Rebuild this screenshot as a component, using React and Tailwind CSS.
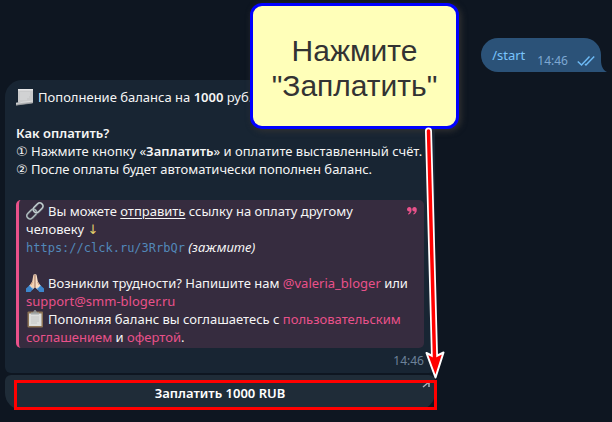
import React from 'react';

function ScrollEmoji() {
    return (
        <svg viewBox="0 0 18 18" className="inline-block w-[18px] h-[18px] -my-1 mr-1 align-baseline" aria-hidden="true">
            <path d="M2 1h15v12.500l-1 1H2z" fill="#c9cacb" />
            <path d="M2 1h15v1.500H2z" fill="#e6e6e6" />
            <path d="M4 5h10M4 7h10M4 9h9M4 11h7" stroke="#d9dadb" strokeWidth="1" />
            <path d="M0 15l17-2v2l-15 2-2 .5z" fill="#b5b7b9" />
            <path d="M0 15.200l17-2.200" stroke="#e6e6e6" strokeWidth=".8" />
            <path d="M.5 17l16-2" stroke="#9a9d9f" strokeWidth=".8" />
        </svg>
    );
}

function LinkEmoji() {
    return (
        <svg viewBox="0 0 18 18" className="inline-block w-[18px] h-[18px] -my-1 mr-1 align-baseline" aria-hidden="true">
            <g fill="none" transform="rotate(-45 9 9)">
                <rect x="-1" y="5.800" width="11" height="6.400" rx="3.200" stroke="#6f7b80" strokeWidth="2" />
                <rect x="-1" y="5.600" width="11" height="6.400" rx="3.200" stroke="#b9c3c6" strokeWidth="1" />
                <rect x="8" y="5.800" width="11" height="6.400" rx="3.200" stroke="#7f8b90" strokeWidth="2" />
                <rect x="8" y="5.600" width="11" height="6.400" rx="3.200" stroke="#cdd5d7" strokeWidth="1" />
            </g>
        </svg>
    );
}

function HandsEmoji() {
    return (
        <svg viewBox="0 0 18 18" className="inline-block w-[18px] h-[18px] -my-1 mr-1 align-baseline" aria-hidden="true">
            <path d="M8.800 0C7.600 0 7.200 1 7 3L6.200 7.500 3.500 11.500 6 16l2.800-2.500z" fill="#f3d2b3" />
            <path d="M9.200 0c1.200 0 1.600 1 1.800 3l.8 4.500 2.700 4L12 16l-2.800-2.500z" fill="#fae0c6" />
            <path d="M9 1v12.500M6.500 8L5 11M11.500 8l1.500 3" stroke="#bd8b6c" strokeWidth=".7" fill="none" />
            <path d="M3.600 11.200L0 14.500V18h4.500l3-3.500c-1.800-.3-3.200-1.500-3.900-3.300z" fill="#3c86cc" />
            <path d="M14.400 11.200L18 14.500V18h-4.500l-3-3.500c1.800-.3 3.200-1.500 3.900-3.300z" fill="#3c86cc" />
            <path d="M3.600 11.200c.7 1.800 2.100 3 3.900 3.300M14.400 11.200c-.7 1.800-2.100 3-3.900 3.300" stroke="#8fc0ee" strokeWidth=".9" fill="none" />
        </svg>
    );
}

function ClipboardEmoji() {
    return (
        <svg viewBox="0 0 18 18" className="inline-block w-[18px] h-[18px] -my-1 mr-1 align-baseline" aria-hidden="true">
            <rect x="1.500" y="1.500" width="15.500" height="16" rx="1" fill="#8c7355" />
            <rect x="3" y="3.500" width="12.500" height="12.500" fill="#dcdedd" />
            <path d="M5 7h8M5 9h8M5 11h8M5 13h6" stroke="#bfc2c2" strokeWidth=".8" />
            <path d="M5 4.500V2.500h2.500C7.500.8 8 .2 9 .2s1.500.6 1.500 2.300H13v2z" fill="#a3a8a9" />
            <circle cx="9" cy="1.800" r=".6" fill="#555" />
        </svg>
    );
}

function OutgoingMessage() {
    return (
        <div className="flex justify-end pr-[11px]">
            <div className="relative flex items-center h-[34px] pl-[11px] pr-[6px] rounded-[17px] rounded-br-none bg-[#2b5278]">
                <a href="#start" className="text-[13px] leading-[18px] text-[#79c4fc]">/start</a>
                <time className="ml-3 mt-3 text-[12px] leading-[18px] text-[#7da8d3]">14:46</time>
                <svg viewBox="0 0 18 12" className="w-[18px] h-3 ml-[9px] mt-3" fill="none" stroke="#6dbaf5" strokeWidth="1.500" aria-label="Прочитано">
                    <path d="M.8 6.500L4.500 10 12.500 1.500M8 9l1 1 8.200-8.500" />
                </svg>
                <svg viewBox="0 0 6 12" className="absolute left-full bottom-0 w-[6px] h-3" aria-hidden="true">
                    <path d="M0 0c0 6 2 10 6 12H0z" fill="#2b5278" />
                </svg>
            </div>
        </div>
    );
}

function InfoQuote() {
    return (
        <blockquote className="relative mt-[22px] py-[2px] pl-[7px] border-l-[3px] border-[#e9518a] rounded-[5px] bg-[#362c3f]">
            <p>
                <LinkEmoji />
                Вы можете <u className="underline-offset-2">отправить</u> ссылку на оплату другому
                <br />
                человеку <span className="font-['DejaVu_Sans',sans-serif] leading-none text-[#e3cf6a]">↓</span>
                <br />
                <a href="#pay" className="font-['DejaVu_Sans_Mono',monospace] text-[12px] leading-none text-[#5288b9]">https://clck.ru/3RrbQr</a>{' '}
                <i>(зажмите)</i>
            </p>
            <p className="mt-[18px]">
                <HandsEmoji />
                Возникли трудности? Напишите нам <a href="#valeria" className="text-[#e9518a]">@valeria_bloger</a> или
                <br />
                <a href="#support" className="text-[#e9518a]">support@smm-bloger.ru</a>
                <br />
                <ClipboardEmoji />
                Пополняя баланс вы соглашаетесь с <a href="#terms" className="text-[#e9518a]">пользовательским
                <br />
                соглашением</a> и <a href="#offer" className="text-[#e9518a]">офертой</a>.
            </p>
            <svg viewBox="0 0 10 8" className="absolute top-[7px] right-[7px] w-[10px] h-2" fill="#e9518a" aria-hidden="true">
                <path d="M2.300 0C3.700 0 4.600 1 4.600 2.700 4.600 5 3.400 7 1.300 7.600L.9 6.800C2 6.200 2.500 5.400 2.600 4.500 1 4.700 0 3.700 0 2.300 0 1 1 0 2.300 0z" />
                <path d="M7.500 0C8.900 0 9.800 1 9.800 2.700 9.800 5 8.600 7 6.500 7.600L6.100 6.800C7.200 6.200 7.700 5.400 7.800 4.500 6.200 4.700 5.200 3.700 5.200 2.300 5.200 1 6.200 0 7.500 0z" />
            </svg>
        </blockquote>
    );
}

function BotMessage() {
    return (
        <div className="w-[430px] max-w-full text-[13px] leading-[18px] whitespace-nowrap text-[#f5f5f5]">
            <div className="pt-2 px-[11px] pb-[3px] rounded-t-[17px] rounded-b-[6px] bg-[#182533]">
                <p>
                    <ScrollEmoji />
                    Пополнение баланса на <b className="font-semibold">1000</b> руб.
                </p>
                <h2 className="mt-[18px] font-semibold">Как оплатить?</h2>
                <p>① Нажмите кнопку «<b className="font-semibold">Заплатить</b>» и оплатите выставленный счёт.</p>
                <p>② После оплаты будет автоматически пополнен баланс.</p>
                <InfoQuote />
                <div className="flex justify-end mt-1">
                    <time className="text-[12px] leading-[18px] text-[#6d8299]">14:46</time>
                </div>
            </div>
            <button type="button" className="relative block w-full h-[35px] mt-[2px] rounded-t-[6px] rounded-b-[17px] bg-[#1f2c38] font-semibold text-white">
                Заплатить 1000 RUB
                <svg viewBox="0 0 8 8" className="absolute top-[6px] right-[5px] w-2 h-2" fill="none" stroke="#a9b2ba" strokeWidth="1.500" aria-hidden="true">
                    <path d="M2 1h5v5M7 1L1 6" />
                </svg>
                <span className="absolute top-[5px] left-[9px] -right-[2px] h-[30px] border-3 border-[#ff0000]" />
            </button>
        </div>
    );
}

function Callout() {
    return (
        <>
            <div className="absolute top-[3px] left-[250px] flex items-center justify-center w-[209px] h-[126px] pt-1 border-3 border-[#0000ff] rounded-[12px] bg-[#ffffb9] shadow-[2px_2px_6px_#333] font-['Liberation_Sans',Arial,sans-serif] text-[30px] leading-[35px] text-center text-[#333333]">
                Нажмите
                <br />
                "Заплатить"
            </div>
            <svg viewBox="0 0 26 254" className="absolute top-[126px] left-[422px] w-[26px] h-[254px]" aria-hidden="true">
                <path d="M6.500 5L12.500 230" stroke="#fff" strokeWidth="7" strokeLinecap="round" />
                <path d="M4.500 227l8 4 9-4.500-8 25z" fill="#f00" stroke="#fff" strokeWidth="2" strokeLinejoin="round" />
                <path d="M6.500 5L12.600 234" stroke="#f00" strokeWidth="3.500" strokeLinecap="round" />
            </svg>
        </>
    );
}

export default function App() {
    return (
        <div className="relative min-h-screen overflow-hidden bg-[#0e1621] font-['Noto_Sans','DejaVu_Sans',sans-serif]">
            <main className="flex flex-col gap-2 pt-[38px] pl-[5px]">
                <OutgoingMessage />
                <BotMessage />
            </main>
            <Callout />
        </div>
    );
}
